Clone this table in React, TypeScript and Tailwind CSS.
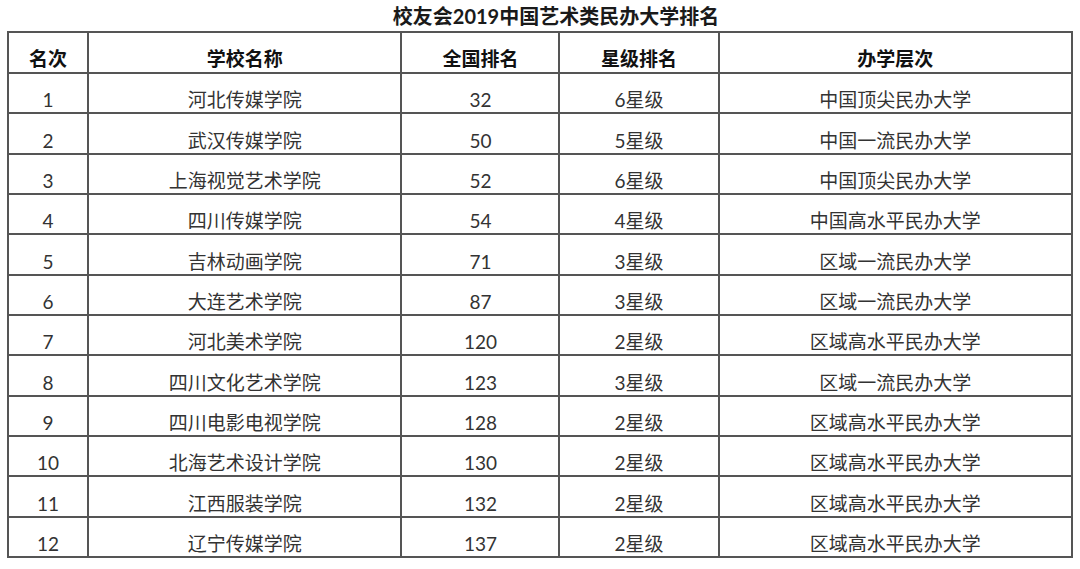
const rows: [string, string, string, string, string][] = [
  ["1", "河北传媒学院", "32", "6星级", "中国顶尖民办大学"],
  ["2", "武汉传媒学院", "50", "5星级", "中国一流民办大学"],
  ["3", "上海视觉艺术学院", "52", "6星级", "中国顶尖民办大学"],
  ["4", "四川传媒学院", "54", "4星级", "中国高水平民办大学"],
  ["5", "吉林动画学院", "71", "3星级", "区域一流民办大学"],
  ["6", "大连艺术学院", "87", "3星级", "区域一流民办大学"],
  ["7", "河北美术学院", "120", "2星级", "区域高水平民办大学"],
  ["8", "四川文化艺术学院", "123", "3星级", "区域一流民办大学"],
  ["9", "四川电影电视学院", "128", "2星级", "区域高水平民办大学"],
  ["10", "北海艺术设计学院", "130", "2星级", "区域高水平民办大学"],
  ["11", "江西服装学院", "132", "2星级", "区域高水平民办大学"],
  ["12", "辽宁传媒学院", "137", "2星级", "区域高水平民办大学"],
];

const headers = ["名次", "学校名称", "全国排名", "星级排名", "办学层次"];
const widths = ["w-[80px]", "w-[313px]", "w-[158px]", "w-[159px]", "w-[353px]"];

export default function App() {
  return (
    <div
      className="w-[1080px] h-[569px] bg-white overflow-hidden"
      style={{ fontFamily: "Lato, 'Noto Sans CJK SC', sans-serif" }}
    >
      <div className="h-[31px] flex items-end justify-center pl-[32px] pb-[1px] text-[20px] leading-[28px] font-bold text-[#1a1a1a]">
        校友会2019中国艺术类民办大学排名
      </div>
      <table className="ml-[7px] w-[1066px] border-collapse border-2 border-[#555] table-fixed">
        <colgroup>
          {widths.map((w, i) => (
            <col key={i} className={w} />
          ))}
        </colgroup>
        <thead>
          <tr className="h-[41px]">
            {headers.map((h) => (
              <th
                key={h}
                className="border-2 border-[#555] align-bottom pb-[1px] text-center text-[19px] leading-[24px] font-bold text-[#111]"
              >
                {h}
              </th>
            ))}
          </tr>
        </thead>
        <tbody>
          {rows.map((r) => (
            <tr key={r[0]} className="h-[40.33px]">
              {r.map((c, i) => (
                <td
                  key={i}
                  className="border-2 border-[#555] align-bottom pb-0 text-center text-[19px] leading-[24px] text-[#333]"
                >
                  {c}
                </td>
              ))}
            </tr>
          ))}
        </tbody>
      </table>
    </div>
  );
}
